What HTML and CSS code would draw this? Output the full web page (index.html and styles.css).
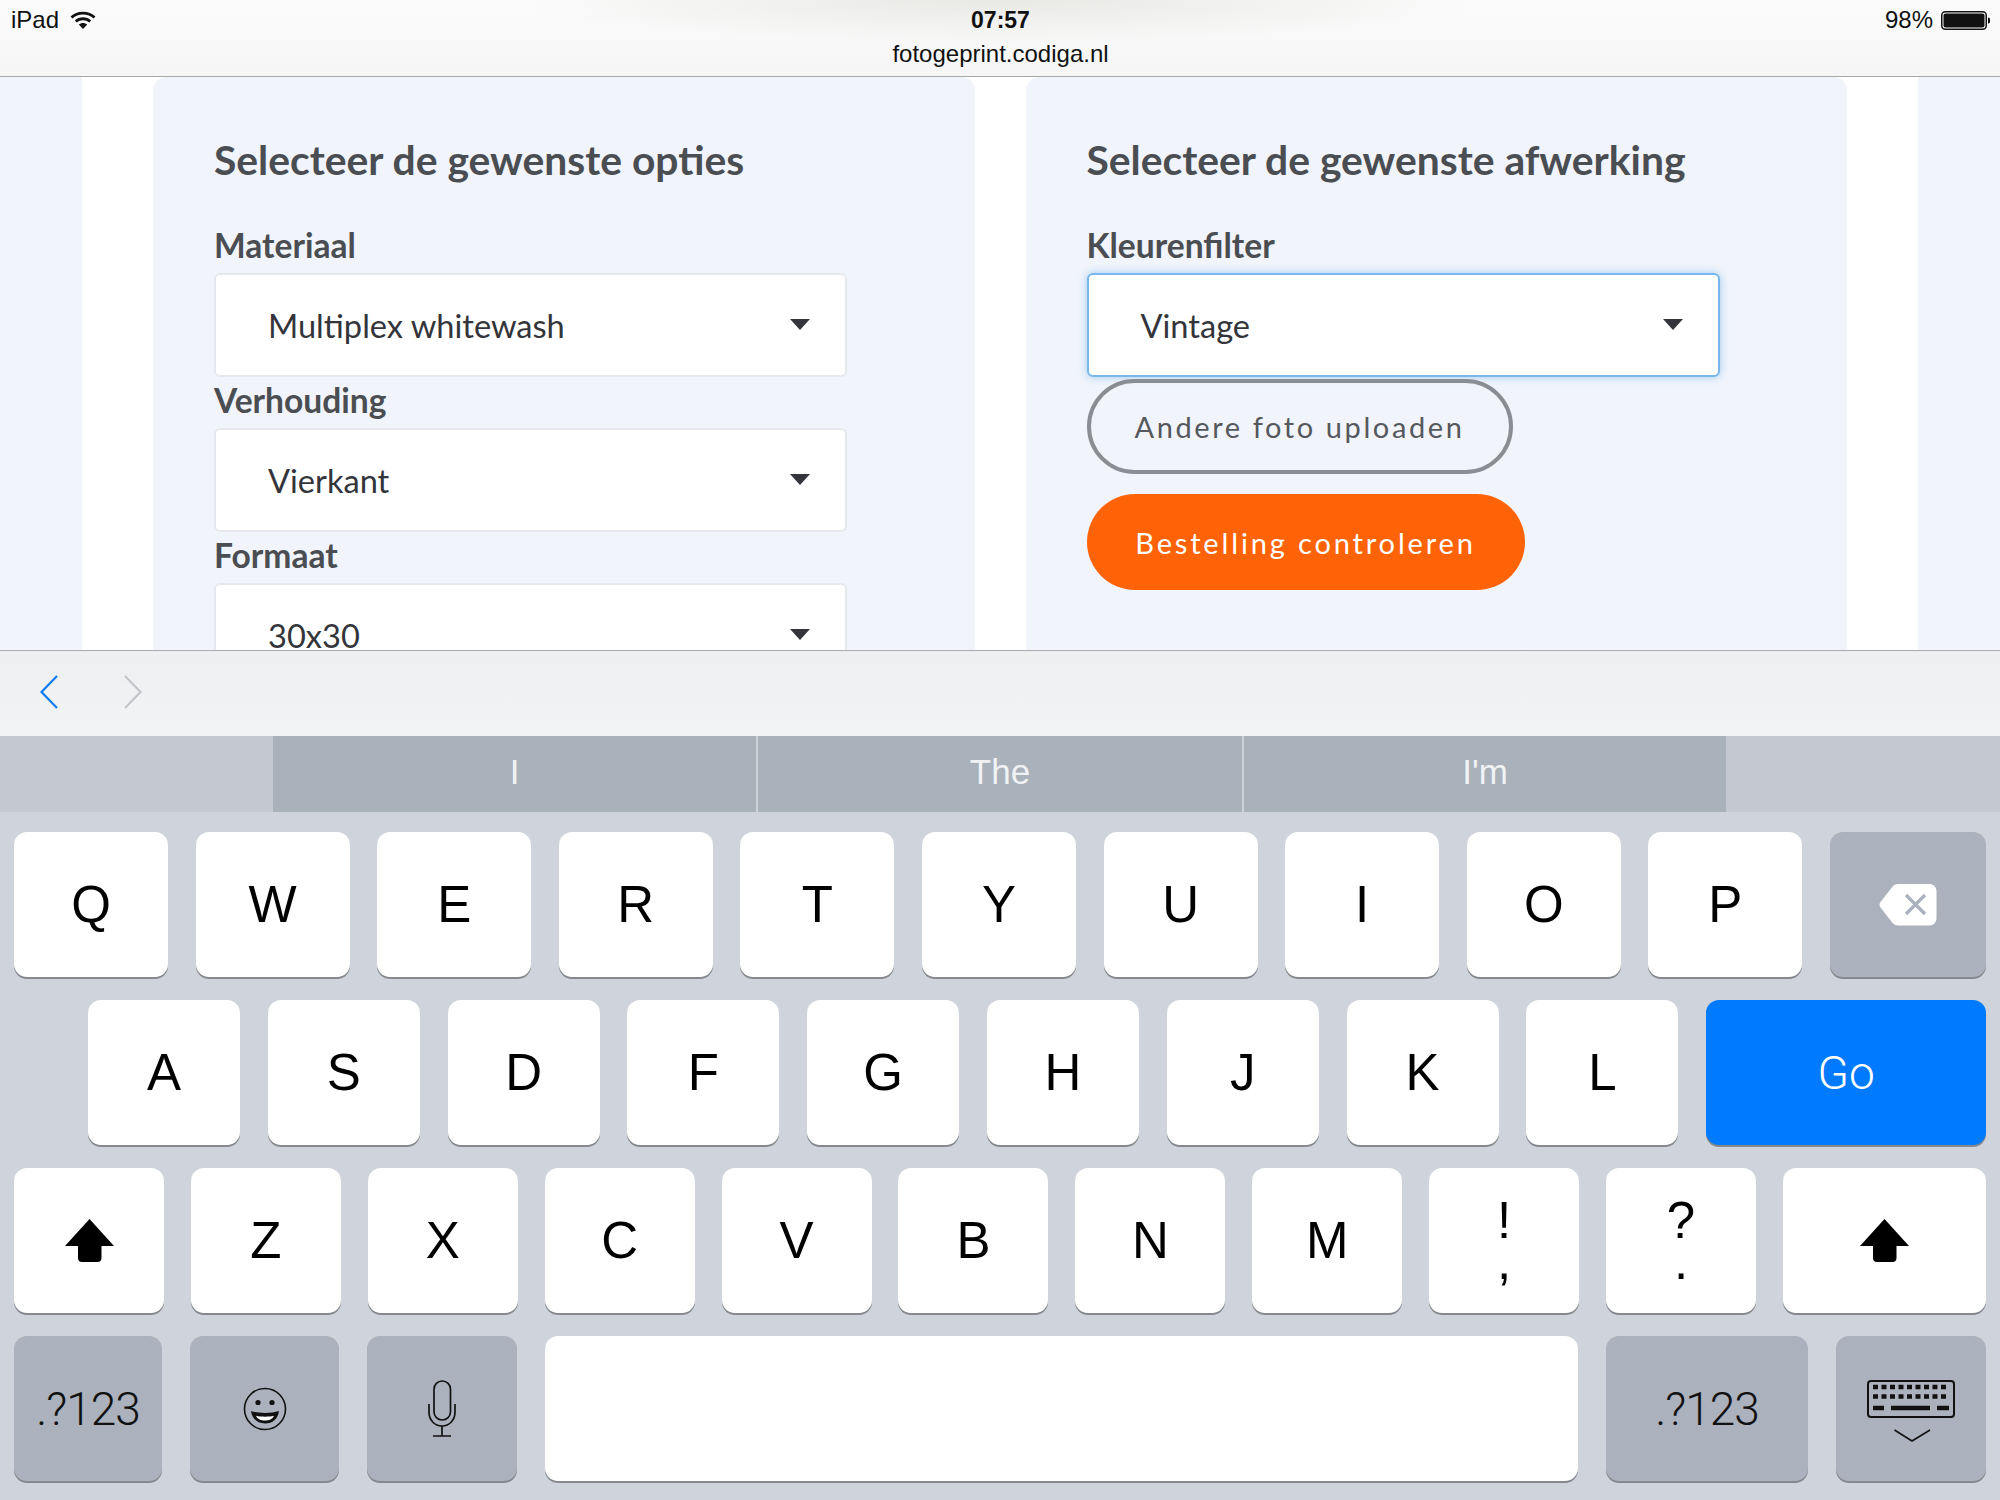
FILE: index.html
```html
<!DOCTYPE html>
<html lang="nl">
<head>
  <meta charset="UTF-8">
  <title>Fotogeprint</title>
  <link rel="stylesheet" href="styles.css">
</head>
<body>
  <div class="status-bar">
    <div class="status-left">
      <span>iPad</span>
      <svg class="wifi" viewBox="0 0 26 18" width="26" height="18">
        <path d="M1.5 6.5C7.5 .6 18.500 .6 24.500 6.500" fill="none" stroke="#111" stroke-width="2.800"/>
        <path d="M5.800 10.500C9.800 6.800 16.200 6.800 20.200 10.500" fill="none" stroke="#111" stroke-width="2.800"/>
        <path d="M13 18L8.800 13.600C11 11.400 15 11.400 17.200 13.600Z" fill="#111"/>
      </svg>
    </div>
    <div class="status-center">
      <div class="clock">07:57</div>
      <div class="url">fotogeprint.codiga.nl</div>
    </div>
    <div class="status-right">
      <span>98%</span>
      <svg class="battery" viewBox="0 0 49 19" width="49" height="19">
        <rect x=".75" y=".75" width="44.500" height="17.500" rx="3.500" fill="none" stroke="#111" stroke-width="1.500"/>
        <rect x="2.500" y="2.500" width="41" height="14" rx="2" fill="#111"/>
        <path d="M47 6.500c1.200 0 2 .8 2 1.800v2.400c0 1-.8 1.800-2 1.800z" fill="#111"/>
      </svg>
    </div>
  </div>

  <div class="page">
    <div class="sheet">
      <div class="panel">
        <h2>Selecteer de gewenste opties</h2>
        <label>Materiaal</label>
        <div class="select">
          <span>Multiplex whitewash</span>
          <svg class="caret" viewBox="0 0 20 11" width="20" height="11"><path d="M0 0H20L10 11Z"/></svg>
        </div>
        <label>Verhouding</label>
        <div class="select">
          <span>Vierkant</span>
          <svg class="caret" viewBox="0 0 20 11" width="20" height="11"><path d="M0 0H20L10 11Z"/></svg>
        </div>
        <label>Formaat</label>
        <div class="select">
          <span>30x30</span>
          <svg class="caret" viewBox="0 0 20 11" width="20" height="11"><path d="M0 0H20L10 11Z"/></svg>
        </div>
      </div>
      <div class="panel">
        <h2>Selecteer de gewenste afwerking</h2>
        <label>Kleurenfilter</label>
        <div class="select focused">
          <span>Vintage</span>
          <svg class="caret" viewBox="0 0 20 11" width="20" height="11"><path d="M0 0H20L10 11Z"/></svg>
        </div>
        <button class="btn btn-outline">Andere foto uploaden</button>
        <button class="btn btn-orange">Bestelling controleren</button>
      </div>
    </div>
  </div>

  <div class="form-toolbar">
    <svg viewBox="0 0 18 34" width="18" height="34"><path d="M17 1L1.500 17L17 33" fill="none" stroke="#0a7bec" stroke-width="2.200"/></svg>
    <svg viewBox="0 0 18 34" width="18" height="34"><path d="M1 1L16.500 17L1 33" fill="none" stroke="#c3c5c8" stroke-width="2.200"/></svg>
  </div>

  <div class="suggestions">
    <div class="suggestion">I</div>
    <div class="suggestion">The</div>
    <div class="suggestion">I'm</div>
  </div>

  <div class="keyboard">
    <div class="key-row row-one">
      <div class="key">Q</div>
      <div class="key">W</div>
      <div class="key">E</div>
      <div class="key">R</div>
      <div class="key">T</div>
      <div class="key">Y</div>
      <div class="key">U</div>
      <div class="key">I</div>
      <div class="key">O</div>
      <div class="key">P</div>
      <div class="key dark wide">
        <svg viewBox="0 0 58 43" width="58" height="43">
          <path d="M19 1H50C54.500 1 57.500 4 57.500 8.500V35C57.500 39.500 54.500 42.500 50 42.500H19C17 42.500 15.500 41.800 14 40.500L1.500 24.500C.2 22.800 .2 20.700 1.500 19L14 3C15.500 1.700 17 1 19 1Z" fill="#fff"/>
          <path d="M27 12L46 31M46 12L27 31" stroke="#abb2bd" stroke-width="3.200" fill="none"/>
        </svg>
      </div>
    </div>

    <div class="key-row row-two">
      <div class="key">A</div>
      <div class="key">S</div>
      <div class="key">D</div>
      <div class="key">F</div>
      <div class="key">G</div>
      <div class="key">H</div>
      <div class="key">J</div>
      <div class="key">K</div>
      <div class="key">L</div>
      <div class="key key-go wide">Go</div>
    </div>

    <div class="key-row row-three">
      <div class="key">
        <svg viewBox="0 0 49 43" width="49" height="43"><path d="M24.500 0L49 27H36.500V39C36.500 41.500 35 43 32.500 43H17C14.500 43 13 41.500 13 39V27H0Z"/></svg>
      </div>
      <div class="key">Z</div>
      <div class="key">X</div>
      <div class="key">C</div>
      <div class="key">V</div>
      <div class="key">B</div>
      <div class="key">N</div>
      <div class="key">M</div>
      <div class="key stacked"><span>!</span><span>,</span></div>
      <div class="key stacked"><span>?</span><span>.</span></div>
      <div class="key wide">
        <svg viewBox="0 0 49 43" width="49" height="43"><path d="M24.500 0L49 27H36.500V39C36.500 41.500 35 43 32.500 43H17C14.500 43 13 41.500 13 39V27H0Z"/></svg>
      </div>
    </div>

    <div class="key-row row-four">
      <div class="key dark numbers k-148">.?123</div>
      <div class="key dark k-149">
        <svg viewBox="0 0 44 46" width="44" height="46" class="emoji">
          <circle cx="22" cy="23" r="20.500" fill="none" stroke="#111" stroke-width="1.600"/>
          <circle cx="15" cy="16.500" r="2.600" fill="#111"/>
          <circle cx="29" cy="16.500" r="2.600" fill="#111"/>
          <path d="M8 25C16 27.500 28 27.500 36 25C35 33 29.500 37.500 22 37.500C14.500 37.500 9 33 8 25Z" fill="#111"/>
          <path d="M13 29.800C18 31 26 31 31 29.800C29.500 33.400 26 34.600 22 34.600C18 34.600 14.500 33.400 13 29.800Z" fill="#fff"/>
        </svg>
      </div>
      <div class="key dark k-150">
        <svg viewBox="0 0 28 57" width="28" height="57" fill="none" stroke="#111" stroke-width="1.700">
          <rect x="6" y="1" width="16.500" height="39" rx="8.200"/>
          <path d="M1 24V32C1 40 6.500 46 14 46C21.500 46 27 40 27 32V24"/>
          <path d="M14 46V56M5 56H23"/>
        </svg>
      </div>
      <div class="key space"></div>
      <div class="key dark numbers k-202">.?123</div>
      <div class="key dark wide">
        <svg class="hide-kb" viewBox="0 0 88 63" width="88" height="63">
          <rect x="1" y="1" width="86" height="36" rx="3" fill="none" stroke="#111" stroke-width="2"/>
          <path d="M6 7H82M6 16.500H82" stroke="#111" stroke-width="4.500" stroke-dasharray="5 3.500" fill="none"/>
          <path d="M6 28H17M24 28H63M70 28H82" stroke="#111" stroke-width="4.500" fill="none"/>
          <path d="M27.500 50L45 61L63 50" stroke="#111" stroke-width="1.600" fill="none"/>
        </svg>
      </div>
    </div>
  </div>
</body>
</html>
```

FILE: styles.css
```css
body {
  margin: 0;
  width: 2000px;
  height: 1500px;
  overflow: hidden;
  font-family: "Liberation Sans", Arial, sans-serif;
  background-color: #cfd3db;
}

/* ios status bar */
.status-bar {
  height: 77px;
  box-sizing: border-box;
  border-bottom: 1px solid #a8a8a8;
  display: grid;
  grid-template-columns: 1fr auto 1fr;
  padding: 0 10px 0 11px;
  color: #111;
  font-size: 24px;
  background: radial-gradient(ellipse 480px 44px at 50% 0, #e8e8e5, rgba(232, 232, 229, 0)), linear-gradient(#fbfbfb, #f6f6f6);
}

.status-left {
  display: flex;
  align-items: flex-start;
  gap: 11px;
  padding-top: 6px;
}

.wifi {
  margin-top: 5px;
}

.status-center {
  text-align: center;
  padding-top: 7px;
}

.clock {
  font-size: 23px;
  font-weight: bold;
  line-height: 27px;
}

.url {
  margin-top: 6px;
  font-size: 24px;
  line-height: 27px;
}

.status-right {
  display: flex;
  justify-content: flex-end;
  align-items: flex-start;
  gap: 8px;
  padding-top: 6px;
}

.battery {
  margin-top: 5px;
}

/* web page behind the keyboard */
.page {
  height: 574px;
  overflow: hidden;
  background-color: #f1f4fb;
  border-bottom: 1px solid #a9abae;
  box-sizing: border-box;
}

.sheet {
  width: 1836px;
  height: 100%;
  margin: 0 auto;
  box-sizing: border-box;
  padding: 0 71px;
  background-color: #fff;
  display: flex;
  gap: 51px;
}

.panel {
  width: 822px;
  box-sizing: border-box;
  padding: 53px 0 0 61px;
  background-color: #f1f4fb;
  border-radius: 14px 14px 0 0;
  color: #4a4d52;
}

.panel h2 {
  margin: 0 0 32px;
  font-family: Lato, sans-serif;
  font-size: 40.800px;
  line-height: 60px;
  font-weight: 700;
}

.panel label {
  display: block;
  font-family: Lato, sans-serif;
  font-size: 33.600px;
  line-height: 46px;
  font-weight: 700;
  height: 51px;
}

.select {
  width: 633px;
  height: 104px;
  box-sizing: border-box;
  padding: 0 35px 0 52px;
  background-color: #fff;
  border: 2px solid #e6e8ee;
  border-radius: 6px;
  display: flex;
  align-items: center;
  justify-content: space-between;
  font-family: Lato, sans-serif;
  font-size: 32.600px;
  color: #33353a;
}

.select.focused {
  border-color: #79b7ec;
  box-shadow: 0 0 9px rgba(102, 175, 233, 0.6);
}

.caret {
  fill: #33353a;
  margin-bottom: 2px;
}

.btn {
  display: block;
  box-sizing: border-box;
  border-radius: 48px;
  font-family: Lato, sans-serif;
  font-size: 29px;
  padding: 0;
  text-align: center;
}

.btn-outline {
  width: 426px;
  height: 95px;
  margin-top: 2px;
  background: transparent;
  border: 4px solid #8a8e94;
  color: #55585d;
  letter-spacing: 2.600px;
}

.btn-orange {
  width: 438px;
  height: 96px;
  margin-top: 20px;
  background-color: #ff6308;
  border: 0;
  color: #fff;
  letter-spacing: 2.850px;
}

/* prev / next bar above the keyboard */
.form-toolbar {
  height: 85px;
  box-sizing: border-box;
  padding: 24px 0 0 40px;
  display: flex;
  align-items: flex-start;
  gap: 66px;
  background: linear-gradient(#eeeff1, #f2f3f5);
}

.suggestions {
  height: 76px;
  padding-left: 273px;
  display: flex;
  background-color: #c4c8d0;
}

.suggestion {
  width: 484px;
  display: flex;
  align-items: center;
  justify-content: center;
  background-color: #a9b1bb;
  border-left: 2px solid #cdd1d8;
  box-sizing: border-box;
  padding-bottom: 4px;
  color: #f0f2f4;
  font-size: 35px;
}

.suggestion:first-child {
  border-left: 0;
  width: 483px;
}

.suggestion:nth-child(2) {
  width: 486px;
}

/* keyboard */
.keyboard {
  height: 688px;
  box-sizing: border-box;
  padding: 20px 14px 0;
  display: flex;
  flex-direction: column;
  gap: 23px;
  background-color: #cfd3db;
}

.key-row {
  display: flex;
  height: 145px;
}

.key {
  box-sizing: border-box;
  height: 145px;
  display: flex;
  align-items: center;
  justify-content: center;
  background-color: #fff;
  border-radius: 13px;
  box-shadow: 0 2px 0 #85888d;
  color: #000;
  font-size: 51px;
}

.key.dark {
  background-color: #abb2bd;
}

.key.wide {
  flex: 1;
}

.row-one {
  gap: 27.600px;
}

.row-one .key {
  width: 154px;
}

.row-two {
  gap: 27.800px;
  padding-left: 74px;
}

.row-two .key {
  width: 152px;
}

.key.key-go {
  background-color: #007aff;
  color: #fff;
  font-family: Roboto, sans-serif;
  font-weight: 300;
  font-size: 46px;
}

.row-three {
  gap: 26.900px;
}

.row-three .key {
  width: 150px;
}

.key.stacked {
  flex-direction: column;
  line-height: 41px;
}

.row-four {
  gap: 28px;
}

.row-four .key.numbers {
  font-family: Roboto, sans-serif;
  font-weight: 300;
  font-size: 46px;
  letter-spacing: -1px;
  color: #111;
}

.k-148 {
  width: 148px;
}

.k-149 {
  width: 149px;
}

.k-150 {
  width: 150px;
}

.k-202 {
  width: 202px;
}

.key.space {
  width: 1033px;
}

.hide-kb {
  margin-top: 6px;
}
```
